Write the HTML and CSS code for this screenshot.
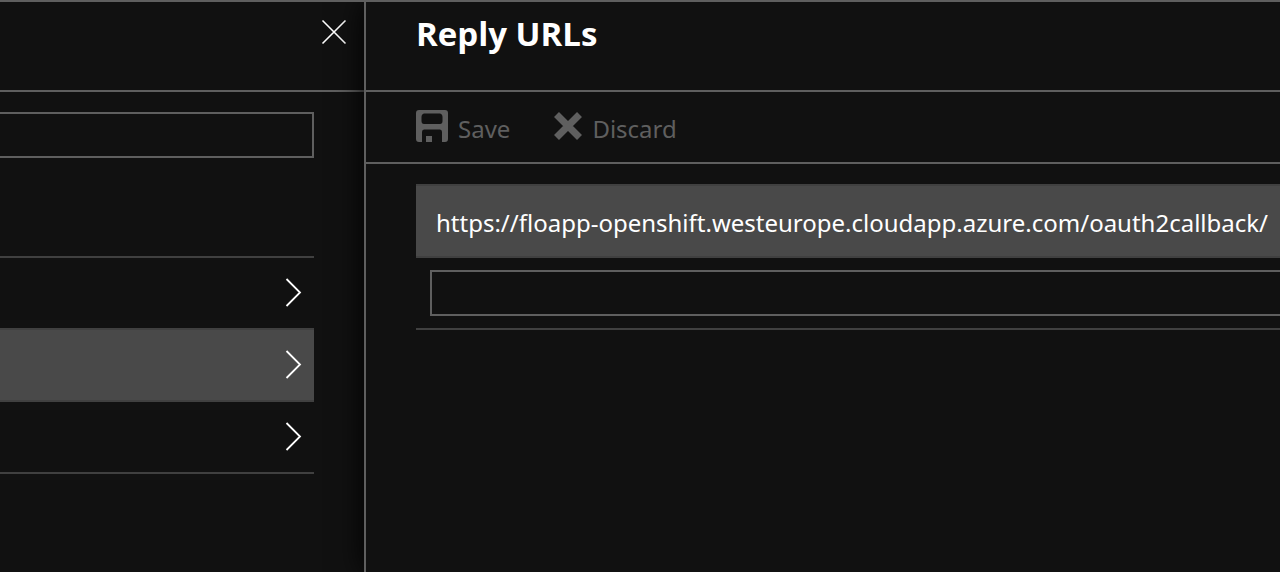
FILE: index.html
```html
<!DOCTYPE html>
<html lang="en">
<head>
<meta charset="utf-8">
<title>Reply URLs</title>
<link rel="stylesheet" href="styles.css">
</head>
<body>
<main class="portal">
  <section class="blade settings" aria-label="Settings">
    <header class="blade-header settings-header">
      <button class="close" type="button" aria-label="Close">
        <svg width="26" height="26" viewBox="0 0 26 26" fill="none" stroke="currentColor" stroke-width="1.6"><path d="M1.5 1.5 24.5 24.5M24.5 1.5 1.5 24.5"/></svg>
      </button>
    </header>
    <div class="settings-body">
      <input class="field filter" type="text" aria-label="Filter settings">
      <nav class="menu" aria-label="General">
        <button class="menu-row" type="button" aria-label="Properties"><svg width="18" height="30" viewBox="0 0 18 30" fill="none" stroke="currentColor" stroke-width="1.8"><path d="M2.5 1 16 14.5 2.5 28"/></svg></button>
        <button class="menu-row selected" type="button" aria-label="Reply URLs"><svg width="18" height="30" viewBox="0 0 18 30" fill="none" stroke="currentColor" stroke-width="1.8"><path d="M2.5 1 16 14.5 2.5 28"/></svg></button>
        <button class="menu-row" type="button" aria-label="Owners"><svg width="18" height="30" viewBox="0 0 18 30" fill="none" stroke="currentColor" stroke-width="1.8"><path d="M2.5 1 16 14.5 2.5 28"/></svg></button>
      </nav>
    </div>
  </section>
  <section class="blade reply">
    <header class="blade-header reply-header">
      <h1 class="title">Reply URLs</h1>
    </header>
    <div class="toolbar">
      <button class="command" type="button" disabled>
        <svg width="32" height="32" viewBox="0 0 32 32" fill="currentColor"><path fill-rule="evenodd" d="M3 0H29Q32 0 32 3V29Q32 32 29 32H26V22Q26 19.5 24 19.5H8Q6 19.5 6 22V32H3Q0 32 0 29V3Q0 0 3 0ZM8 3.5Q5.500 4 5.500 7V11Q5.500 14 8 14H24Q26.500 14 26.500 11V7Q26.500 4 24 3.500Z"/><path d="M10 26H16V32H10Z"/></svg>
        <span class="command-label">Save</span>
      </button>
      <button class="command" type="button" disabled>
        <svg width="28" height="28" viewBox="0 0 28 28" fill="none" stroke="currentColor" stroke-width="7"><path d="M2.5 2.5 25.5 25.5M25.5 2.5 2.5 25.5"/></svg>
        <span class="command-label">Discard</span>
      </button>
    </div>
    <div class="urls">
      <div class="url-row">https://floapp-openshift.westeurope.cloudapp.azure.com/oauth2callback/</div>
      <div class="url-new"><input class="field" type="text" aria-label="New reply URL"></div>
    </div>
  </section>
</main>
</body>
</html>
```
FILE: styles.css
```css
* {
  box-sizing: border-box;
}

body {
  margin: 0;
  background: #111;
  color: #fff;
  font-family: "Segoe UI", "Noto Sans", "Open Sans", sans-serif;
  font-size: 24px;
  line-height: 32px;
}

button {
  border: 0;
  padding: 0;
  background: none;
  color: inherit;
  font: inherit;
}

svg {
  display: block;
  flex: none;
}

.portal {
  display: flex;
  min-height: 100vh;
  overflow: hidden;
  border-top: 2px solid #5f5f5f;
}

.settings {
  flex: 0 0 364px;
}

.reply {
  flex: 1;
  min-width: 0;
  position: relative;
  border-left: 2px solid #5f5f5f;
  background: #111;
  box-shadow: 0 0 28px #000;
}

.blade-header {
  display: flex;
  height: 90px;
  border-bottom: 2px solid #5f5f5f;
}

.settings-header {
  justify-content: flex-end;
  align-items: flex-start;
  padding: 17px 17px 0 0;
}

.reply-header {
  padding: 10px 50px 0;
}

.title {
  margin: 0;
  font-family: "Segoe UI", "Open Sans", "Noto Sans", sans-serif;
  font-size: 33px;
  font-weight: 700;
  line-height: 44px;
}

.settings-body {
  padding: 20px 50px 0 0;
}

.field {
  display: block;
  width: 100%;
  height: 46px;
  padding: 0 12px;
  border: 2px solid #5f5f5f;
  border-radius: 0;
  outline: 0;
  background: #111;
  color: inherit;
  font: inherit;
}

.filter {
  border-left: 0;
}

.menu {
  margin-top: 98px;
}

.menu-row {
  display: flex;
  justify-content: flex-end;
  align-items: center;
  width: 100%;
  height: 74px;
  padding-right: 12px;
  border: solid #404040;
  border-width: 2px 0;
}

.menu-row + .menu-row {
  margin-top: -2px;
}

.selected {
  background: #494949;
}

.toolbar {
  display: flex;
  align-items: center;
  gap: 44px;
  height: 72px;
  padding: 0 50px 2px;
  border-bottom: 2px solid #5f5f5f;
}

.command {
  display: flex;
  align-items: center;
  gap: 10px;
  color: #5f5f5f;
}

.command-label {
  padding-top: 5px;
}

.urls {
  padding: 20px 0 0 50px;
}

.url-row {
  padding: 21px 0 17px 20px;
  border: solid #404040;
  border-width: 2px 0;
  background: #494949;
  white-space: nowrap;
  overflow: hidden;
}

.url-new {
  padding: 12px 0 12px 14px;
  border-bottom: 2px solid #404040;
}

.url-new .field {
  border-right: 0;
}
```
